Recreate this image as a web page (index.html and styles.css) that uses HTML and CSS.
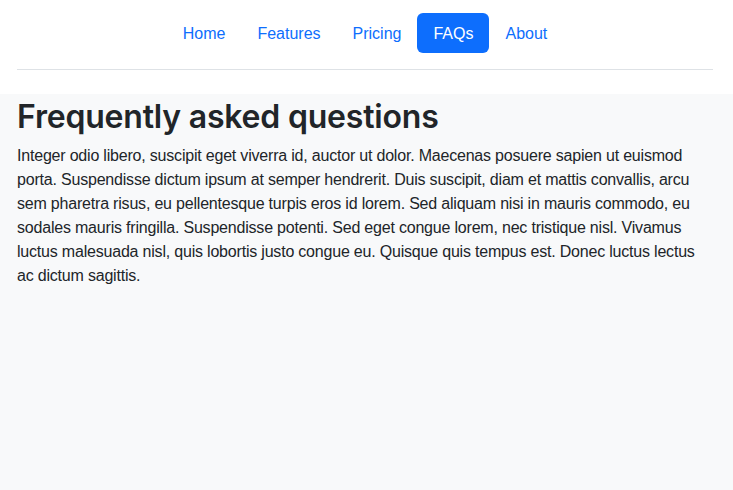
FILE: index.html
```html
<!DOCTYPE html>
<html lang="en">
<head>
<meta charset="utf-8">
<title>FAQs</title>
<link rel="stylesheet" href="styles.css">
</head>
<body>
<header class="site-header">
  <ul class="nav">
    <li><a class="nav-link" href="#">Home</a></li>
    <li><a class="nav-link" href="#">Features</a></li>
    <li><a class="nav-link" href="#">Pricing</a></li>
    <li><a class="nav-link active" href="#">FAQs</a></li>
    <li><a class="nav-link" href="#">About</a></li>
  </ul>
</header>
<main class="content">
  <h1 class="title">Frequently asked questions</h1>
  <p class="text">Integer odio libero, suscipit eget viverra id, auctor ut dolor. Maecenas posuere sapien ut euismod porta. Suspendisse dictum ipsum at semper hendrerit. Duis suscipit, diam et mattis convallis, arcu sem pharetra risus, eu pellentesque turpis eros id lorem. Sed aliquam nisi in mauris commodo, eu sodales mauris fringilla. Suspendisse potenti. Sed eget congue lorem, nec tristique nisl. Vivamus luctus malesuada nisl, quis lobortis justo congue eu. Quisque quis tempus est. Donec luctus lectus ac dictum sagittis.</p>
</main>
</body>
</html>
```
FILE: styles.css
```css
html, body {
  margin: 0;
  padding: 0;
  height: 100%;
}
body {
  font-family: "Liberation Sans", Arial, sans-serif;
  font-size: 16px;
  line-height: 24px;
  color: #212529;
  background: #f8f9fa;
  display: flex;
  flex-direction: column;
}
.site-header {
  background: #fff;
  padding-bottom: 24px;
}
.nav {
  list-style: none;
  margin: 0 20px 0 17px;
  padding: 13px 0 16px;
  display: flex;
  justify-content: center;
  border-bottom: 1px solid #dee2e6;
}
.nav-link {
  display: block;
  padding: 9px 16px 7px;
  color: #0d6efd;
  text-decoration: none;
  border-radius: 6px;
}
.nav-link.active {
  background: #0d6efd;
  color: #fff;
}
.content {
  flex: 1;
  padding: 3px 20px 0 17px;
}
.title {
  margin: 0 0 7px;
  font-family: Inter, "Liberation Sans", sans-serif;
  font-size: 32px;
  line-height: 40px;
  font-weight: 600;
  letter-spacing: -0.2px;
}
.text {
  margin: 0;
  letter-spacing: -0.2px;
}
```
